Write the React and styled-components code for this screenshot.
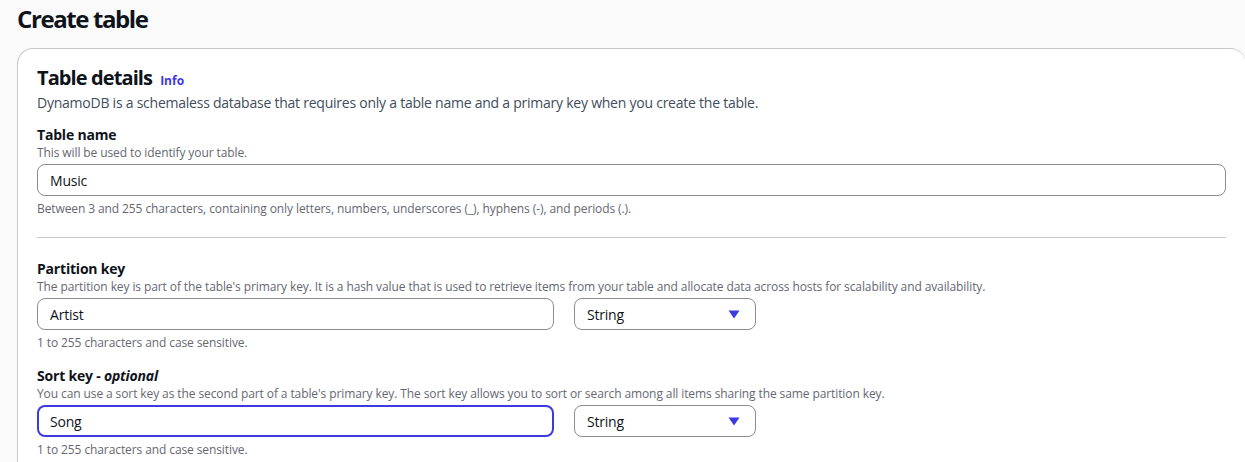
import React from 'react';
import styled, { createGlobalStyle } from 'styled-components';

const Global = createGlobalStyle`
  body {
    margin: 0;
    background: #fafafa;
    font-family: 'Open Sans', 'Noto Sans', sans-serif;
    color: #0f141a;
  }
`;

const BLUE = '#3b3be0';

const Page = styled.div`
  padding: 4px 0 0 17px;
`;

const Title = styled.h1`
  margin: 0 0 14px;
  font-size: 24px;
  line-height: 30px;
  font-weight: 700;
  letter-spacing: -1.4px;
`;

const Card = styled.section`
  background: #fff;
  border: 1px solid #c6c6cd;
  border-right: none;
  border-bottom: none;
  border-radius: 16px 16px 0 0;
  padding: 15px 20px 20px 19px;
  width: 1189px;
`;

const Heading = styled.div`
  display: flex;
  align-items: baseline;
  gap: 8px;
`;

const H2 = styled.h2`
  margin: 0;
  font-size: 20px;
  line-height: 28px;
  font-weight: 700;
  letter-spacing: -0.9px;
`;

const Info = styled.a`
  font-size: 12px;
  font-weight: 700;
  color: ${BLUE};
  text-decoration: none;
`;

const Desc = styled.p`
  margin: 1px 0 12px;
  font-size: 14px;
  line-height: 20px;
  color: #414d5c;
  letter-spacing: -0.24px;
`;

const Field = styled.div`
  margin-top: ${(p) => p.top || 0}px;
`;

const Label = styled.div`
  font-size: 14px;
  line-height: 20px;
  font-weight: 700;
  letter-spacing: -0.2px;
  em {
    font-style: italic;
  }
`;

const Hint = styled.div`
  font-size: 12px;
  line-height: 16px;
  color: #656871;
  letter-spacing: -0.1px;
`;

const Row = styled.div`
  display: flex;
  gap: 20px;
  margin: 3px 0 5px;
`;

const Input = styled.div`
  box-sizing: border-box;
  width: ${(p) => p.width || '100%'};
  height: 32px;
  display: flex;
  align-items: center;
  padding: 0 ${(p) => (p.focused ? 11 : 12)}px;
  border: ${(p) => (p.focused ? `2px solid ${BLUE}` : '1px solid #8c8c94')};
  border-radius: 8px;
  font-size: 14px;
  letter-spacing: -0.2px;
  background: #fff;
`;

const Select = styled(Input)`
  justify-content: space-between;
  padding: 0 15px 0 12px;
  width: 182px;
`;

const Caret = () => (
  <svg width="12" height="9" viewBox="0 0 12 9">
    <path d="M0.5 0.5h11L6 8.5z" fill={BLUE} />
  </svg>
);

const Divider = styled.hr`
  border: none;
  border-top: 1px solid #c6c6cd;
  margin: 20px 0 0;
`;

const App = () => (
  <>
    <Global />
    <Page>
      <Title>Create table</Title>
      <Card>
        <Heading>
          <H2>Table details</H2>
          <Info>Info</Info>
        </Heading>
        <Desc>
          DynamoDB is a schemaless database that requires only a table name and a primary key when you
          create the table.
        </Desc>
        <Field>
          <Label>Table name</Label>
          <Hint>This will be used to identify your table.</Hint>
          <Row>
            <Input>Music</Input>
          </Row>
          <Hint>
            Between 3 and 255 characters, containing only letters, numbers, underscores (_), hyphens
            (-), and periods (.).
          </Hint>
        </Field>
        <Divider />
        <Field top={21}>
          <Label>Partition key</Label>
          <Hint>
            The partition key is part of the table's primary key. It is a hash value that is used to
            retrieve items from your table and allocate data across hosts for scalability and
            availability.
          </Hint>
          <Row>
            <Input width="517px">Artist</Input>
            <Select>
              String
              <Caret />
            </Select>
          </Row>
          <Hint>1 to 255 characters and case sensitive.</Hint>
        </Field>
        <Field top={15}>
          <Label>
            Sort key - <em>optional</em>
          </Label>
          <Hint>
            You can use a sort key as the second part of a table's primary key. The sort key allows
            you to sort or search among all items sharing the same partition key.
          </Hint>
          <Row>
            <Input width="517px" focused>
              Song
            </Input>
            <Select>
              String
              <Caret />
            </Select>
          </Row>
          <Hint>1 to 255 characters and case sensitive.</Hint>
        </Field>
      </Card>
    </Page>
  </>
);

export default App;
